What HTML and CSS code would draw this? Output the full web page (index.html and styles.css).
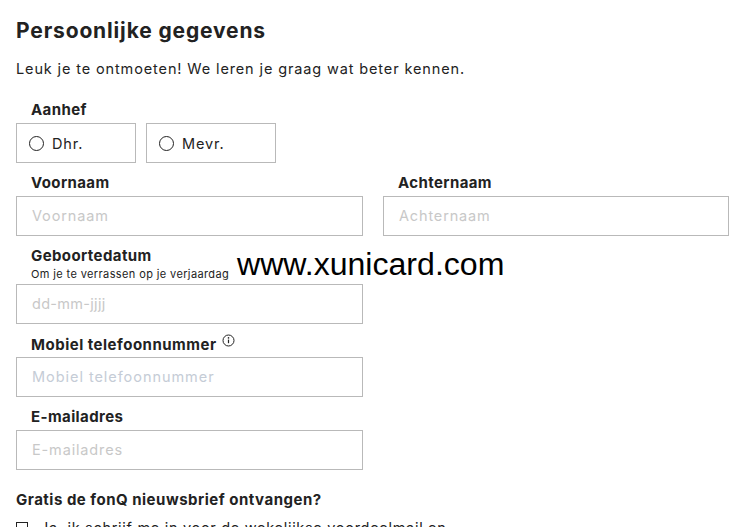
FILE: index.html
```html
<!DOCTYPE html>
<html lang="nl">
<head>
<meta charset="utf-8">
<title>Persoonlijke gegevens</title>
<link rel="stylesheet" href="styles.css">
</head>
<body>
<main class="page">
  <h1 class="title">Persoonlijke gegevens</h1>
  <p class="intro">Leuk je te ontmoeten! We leren je graag wat beter kennen.</p>

  <div class="field field-aanhef">
    <div class="label">Aanhef</div>
    <div class="radios">
      <label class="radio radio-dhr"><span class="dot"></span>Dhr.</label>
      <label class="radio radio-mevr"><span class="dot"></span>Mevr.</label>
    </div>
  </div>

  <div class="name-row">
    <div class="field">
      <div class="label">Voornaam</div>
      <div class="input">Voornaam</div>
    </div>
    <div class="field">
      <div class="label">Achternaam</div>
      <div class="input">Achternaam</div>
    </div>
  </div>

  <div class="field field-half field-birth">
    <div class="label">Geboortedatum</div>
    <div class="sub">Om je te verrassen op je verjaardag</div>
    <div class="input input-date">dd-mm-jjjj</div>
  </div>

  <div class="field field-half field-phone">
    <div class="label label-phone">Mobiel telefoonnummer
      <svg class="info" width="13" height="13" viewBox="0 0 13 13" aria-hidden="true">
        <circle cx="6.5" cy="6.5" r="5.5" fill="none" stroke="#222" stroke-width="1"/>
        <path d="M6.5 5.6v3.6" stroke="#222" stroke-width="1.2" fill="none"/>
        <circle cx="6.5" cy="3.9" r=".8" fill="#222"/>
      </svg>
    </div>
    <div class="input input-phone">Mobiel telefoonnummer</div>
  </div>

  <div class="field field-half field-mail">
    <div class="label">E-mailadres</div>
    <div class="input">E-mailadres</div>
  </div>

  <h2 class="news">Gratis de fonQ nieuwsbrief ontvangen?</h2>
  <label class="check"><span class="box"></span>Ja, ik schrijf me in voor de wekelijkse voordeelmail en</label>
</main>
<div class="watermark">www.xunicard.com</div>
</body>
</html>
```

FILE: styles.css
```css
html, body {
  margin: 0;
  height: 527px;
  overflow: hidden;
  background: #fff;
}
body {
  position: relative;
  font-family: Inter, "Liberation Sans", sans-serif;
  color: #222;
}
.page {
  padding: 19px 11px 0 16px;
}
.title {
  margin: 0;
  font-size: 21px;
  line-height: 24px;
  font-weight: 700;
  letter-spacing: .85px;
}
.intro {
  margin: 16px 0 0;
  font-size: 14.5px;
  line-height: 20px;
  letter-spacing: .87px;
}
.field-aanhef {
  margin-top: 21px;
}
.label {
  padding-left: 15px;
  font-size: 15px;
  line-height: 20px;
  font-weight: 700;
  letter-spacing: .4px;
  height: 20px;
}
.label-phone {
  letter-spacing: .5px;
}
.radios {
  display: flex;
  gap: 10px;
  margin-top: 3px;
}
.radio {
  display: flex;
  align-items: center;
  box-sizing: border-box;
  height: 40px;
  border: 1px solid #b9b9b9;
  padding-left: 12px;
  font-size: 14.5px;
  letter-spacing: .87px;
}
.radio-dhr { width: 120px; }
.radio-mevr { width: 130px; }
.dot {
  box-sizing: border-box;
  width: 15px;
  height: 15px;
  border: 1.3px solid #222;
  border-radius: 50%;
  margin-right: 8px;
}
.name-row {
  display: grid;
  grid-template-columns: 347px 346px;
  gap: 20px;
  margin-top: 10px;
}
.input {
  box-sizing: border-box;
  height: 40px;
  margin-top: 3px;
  border: 1px solid #b9b9b9;
  padding-left: 15px;
  font-size: 14.5px;
  line-height: 38px;
  letter-spacing: .85px;
  color: #c8c8c8;
}
.input-phone {
  color: #c5ccd6;
  letter-spacing: .95px;
}
.input-date {
  letter-spacing: .3px;
}
.field-half {
  width: 347px;
}
.field-birth { margin-top: 10px; }
.field-birth .input { margin-top: 1px; }
.sub {
  padding-left: 15px;
  font-size: 11px;
  line-height: 15px;
  height: 16px;
  margin-top: 1px;
  letter-spacing: .38px;
  white-space: nowrap;
}
.field-phone { margin-top: 10px; }
.field-mail { margin-top: 10px; }
.info {
  vertical-align: 3px;
  margin-left: 1px;
}
.news {
  margin: 20px 0 0;
  font-size: 15px;
  line-height: 20px;
  font-weight: 700;
  letter-spacing: .5px;
}
.check {
  display: flex;
  align-items: center;
  margin-top: 8px;
  font-size: 14.5px;
  line-height: 20px;
  letter-spacing: .7px;
  white-space: nowrap;
}
.box {
  box-sizing: border-box;
  width: 12px;
  height: 12px;
  border: 1.3px solid #222;
  margin-right: 12px;
}
.watermark {
  position: absolute;
  left: 237px;
  top: 246px;
  font-family: "Liberation Sans", Arial, sans-serif;
  font-size: 32.1px;
  line-height: 37px;
  color: #000;
  white-space: nowrap;
}
```
